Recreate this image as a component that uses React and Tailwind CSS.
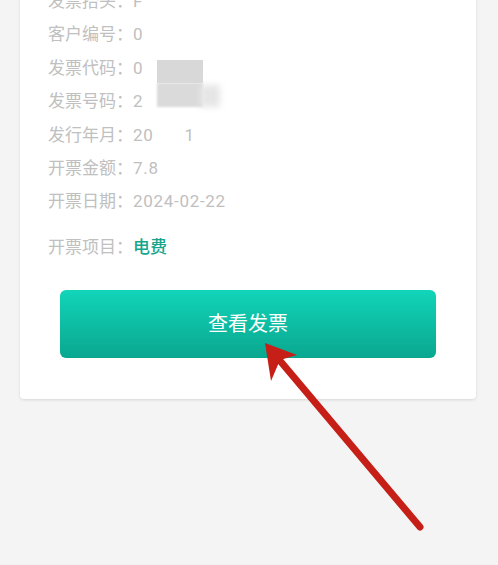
import React from 'react';

const rows = [
  { label: '发票抬头', value: 'F' },
  { label: '客户编号', value: '0' },
  { label: '发票代码', value: '0' },
  { label: '发票号码', value: '2' },
  { label: '发行年月', value: '20', tail: '1' },
  { label: '开票金额', value: '7.8' },
  { label: '开票日期', value: '2024-02-22' },
];

const font = { fontFamily: 'Roboto, "Noto Sans CJK SC", "Noto Sans", sans-serif' };

const App = () => {
  return (
    <div className="relative h-[565px] w-[498px] overflow-hidden bg-[#f4f4f4]" style={font}>
      <div className="ml-[20px] mr-[22px] rounded-b-[4px] bg-white pb-[41px] shadow-[0_1px_3px_rgba(0,0,0,0.12)]">
        <div className="relative -mt-[15px] pl-[28px] text-[17px] text-[#c0c0c0]">
          {rows.map((r) => (
            <div key={r.label} className="flex h-[33.4px] items-center">
              <span>{r.label}：</span>
              <span className="tracking-[0.7px]">{r.value}</span>
              {r.tail && <span className="ml-[31px]">{r.tail}</span>}
            </div>
          ))}
          <div className="mt-[12px] flex h-[33.4px] items-center">
            <span>开票项目：</span>
            <span className="font-medium text-[#17a58e]">电费</span>
          </div>

          {/* masks */}
          <div className="absolute left-[137px] top-[75px] h-[23px] w-[46px] bg-[#d8d8d8]" />
          <div className="absolute left-[137px] top-[98px] h-[24px] w-[46px] bg-[#dadada] blur-[1px]" />
          <div className="absolute left-[180px] top-[100px] h-[22px] w-[20px] bg-[#e6e6e6] blur-[3px]" />
        </div>

        <div className="mt-[26px] px-[40px]">
          <button className="flex h-[68px] w-full items-center justify-center rounded-[6px] bg-gradient-to-b from-[#11d5b9] to-[#0aa78f] text-[20px] text-white">
            查看发票
          </button>
        </div>
      </div>

      <svg className="pointer-events-none absolute left-0 top-0" width="498" height="565">
        <line x1="420" y1="527" x2="276" y2="356" stroke="#c61f17" strokeWidth="7" strokeLinecap="round" />
        <polygon points="265,343 297,355 280,360 271,381" fill="#c61f17" />
      </svg>
    </div>
  );
};

export default App;
